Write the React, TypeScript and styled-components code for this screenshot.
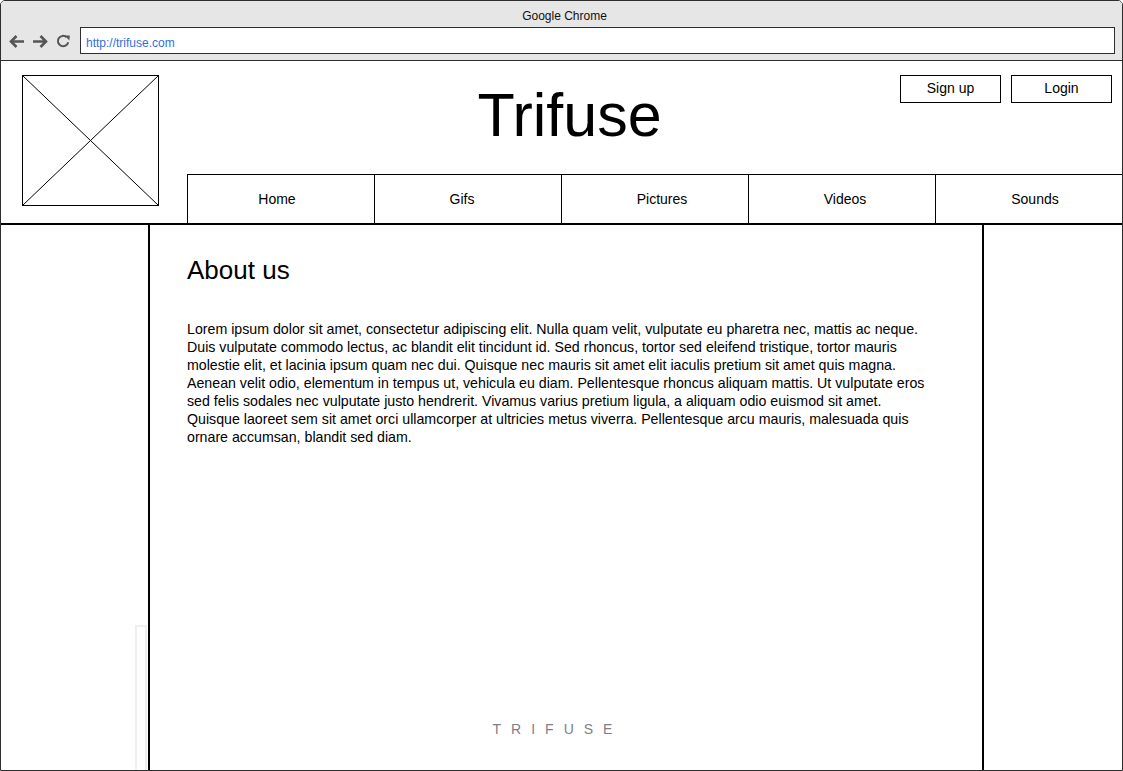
import React from "react";
import styled, { createGlobalStyle } from "styled-components";

const Global = createGlobalStyle`
  html, body { margin: 0; padding: 0; background: #fff; }
  body { font-family: "Liberation Sans", Arial, sans-serif; color: #000; }
  * { box-sizing: border-box; }
`;

const Frame = styled.div`
  width: 1123px;
  height: 771px;
  border: 1px solid #2e2e2e;
  border-radius: 5px 5px 0 0;
  display: flex;
  flex-direction: column;
  overflow: hidden;
  background: #fff;
`;

const TitleBar = styled.div`
  height: 60px;
  flex: none;
  background: #e6e6e6;
  border-bottom: 1px solid #2e2e2e;
  padding: 8px 7px 0 7px;
  display: flex;
  flex-direction: column;
  gap: 4px;
`;

const WindowTitle = styled.div`
  font-size: 12px;
  line-height: 14px;
  text-align: center;
  padding-left: 6px;
  color: #111;
`;

const AddressRow = styled.div`
  display: flex;
  align-items: center;
  height: 27px;
`;

const NavIcons = styled.div`
  display: flex;
  align-items: center;
  gap: 7px;
  width: 72px;
  padding-top: 1px;
  color: #555;
`;

const AddressBar = styled.div`
  flex: 1;
  height: 27px;
  background: #fff;
  border: 1px solid #2e2e2e;
  display: flex;
  align-items: center;
  padding: 4px 0 0 5px;
  font-size: 12px;
  color: #2f6fe0;
`;

const Header = styled.header`
  flex: none;
  height: 164px;
  border-bottom: 2px solid #000;
  display: grid;
  grid-template-columns: 186px 935px;
  grid-template-rows: 113px 49px;
`;

const LogoCell = styled.div`
  grid-column: 1;
  grid-row: 1 / 3;
  padding: 14px 0 0 21px;
`;

const Placeholder = styled.svg`
  display: block;
  width: 137px;
  height: 131px;
`;

const TopCell = styled.div`
  grid-column: 2;
  grid-row: 1;
  display: grid;
  grid-template-areas: "stack";
`;

const SiteTitle = styled.h1`
  grid-area: stack;
  margin: 0;
  padding: 24px 170px 0 0;
  font-size: 61px;
  line-height: 60px;
  font-weight: normal;
  text-align: center;
  align-self: start;
`;

const Actions = styled.div`
  grid-area: stack;
  justify-self: end;
  align-self: start;
  display: flex;
  gap: 10px;
  padding: 14px 10px 0 0;
`;

const ActionButton = styled.button`
  width: 101px;
  height: 28px;
  border: 1px solid #000;
  background: #fff;
  font-family: "Liberation Sans", Arial, sans-serif;
  font-size: 14px;
  color: #000;
  padding: 0 0 2px 0;
`;

const Nav = styled.nav`
  grid-column: 2;
  grid-row: 2;
  display: grid;
  grid-template-columns: repeat(5, 187px);
  border-top: 1px solid #000;
`;

const NavItem = styled.div<{ $shift: number }>`
  border-left: 1px solid #000;
  display: flex;
  align-items: center;
  justify-content: center;
  font-size: 14px;
  padding-bottom: 1px;
  padding-left: ${(p) => (p.$shift > 0 ? p.$shift * 2 : 0)}px;
  padding-right: ${(p) => (p.$shift < 0 ? -p.$shift * 2 : 0)}px;
`;

const Main = styled.main`
  flex: 1;
  display: grid;
  grid-template-columns: 147px 836px 138px;
  min-height: 0;
`;

const SideColumn = styled.div`
  display: flex;
  flex-direction: column;
  justify-content: flex-end;
  align-items: flex-end;
`;

const ScrollStub = styled.div`
  width: 12px;
  height: 145px;
  margin-right: 1px;
  border: 2px solid #efefef;
  border-bottom: none;
`;

const Content = styled.section`
  border-left: 2px solid #000;
  border-right: 2px solid #000;
  padding: 30px 47px 32px 37px;
  display: flex;
  flex-direction: column;
`;

const Heading = styled.h2`
  margin: 0;
  font-size: 26px;
  line-height: 30px;
  font-weight: normal;
`;

const Paragraph = styled.p`
  margin: 35px 0 0 0;
  font-size: 14.2px;
  line-height: 18px;
`;

const Footer = styled.div`
  margin-top: auto;
  text-align: center;
  font-size: 14px;
  line-height: 18px;
  letter-spacing: 10px;
  color: #7e8088;
  padding-right: 7px;
`;

const navItems: { label: string; shift: number }[] = [
  { label: "Home", shift: -4 },
  { label: "Gifs", shift: -6 },
  { label: "Pictures", shift: 7 },
  { label: "Videos", shift: 3 },
  { label: "Sounds", shift: 6 },
];

const text =
  "Lorem ipsum dolor sit amet, consectetur adipiscing elit. Nulla quam velit, vulputate eu pharetra nec, mattis ac neque. Duis vulputate commodo lectus, ac blandit elit tincidunt id. Sed rhoncus, tortor sed eleifend tristique, tortor mauris molestie elit, et lacinia ipsum quam nec dui. Quisque nec mauris sit amet elit iaculis pretium sit amet quis magna. Aenean velit odio, elementum in tempus ut, vehicula eu diam. Pellentesque rhoncus aliquam mattis. Ut vulputate eros sed felis sodales nec vulputate justo hendrerit. Vivamus varius pretium ligula, a aliquam odio euismod sit amet. Quisque laoreet sem sit amet orci ullamcorper at ultricies metus viverra. Pellentesque arcu mauris, malesuada quis ornare accumsan, blandit sed diam.";

const BackIcon = () => (
  <svg width="17" height="15" viewBox="0 0 17 15" fill="none" stroke="#555" strokeWidth="2.6">
    <path d="M16 7.5H3" />
    <path d="M8.5 2L3 7.5L8.5 13" />
  </svg>
);

const ForwardIcon = () => (
  <svg width="17" height="15" viewBox="0 0 17 15" fill="none" stroke="#555" strokeWidth="2.6">
    <path d="M1 7.5H14" />
    <path d="M8.5 2L14 7.5L8.5 13" />
  </svg>
);

const ReloadIcon = () => (
  <svg width="15" height="14" viewBox="0 0 15 14" fill="none">
    <path d="M12.2 8.2A5.2 5.2 0 1 1 10.6 3.2" stroke="#555" strokeWidth="2" />
    <path d="M8.6 1.6L13.8 1.4L13.4 6.6Z" fill="#555" />
  </svg>
);

export default function App() {
  return (
    <>
      <Global />
      <Frame>
        <TitleBar>
          <WindowTitle>Google Chrome</WindowTitle>
          <AddressRow>
            <NavIcons>
              <BackIcon />
              <ForwardIcon />
              <ReloadIcon />
            </NavIcons>
            <AddressBar>http://trifuse.com</AddressBar>
          </AddressRow>
        </TitleBar>
        <Header>
          <LogoCell>
            <Placeholder viewBox="0 0 137 131">
              <rect x="0.5" y="0.5" width="136" height="130" fill="#fff" stroke="#000" />
              <path d="M0.5 0.5L136.5 130.5M136.5 0.5L0.5 130.5" stroke="#000" strokeWidth="1" />
            </Placeholder>
          </LogoCell>
          <TopCell>
            <SiteTitle>Trifuse</SiteTitle>
            <Actions>
              <ActionButton>Sign up</ActionButton>
              <ActionButton>Login</ActionButton>
            </Actions>
          </TopCell>
          <Nav>
            {navItems.map((n) => (
              <NavItem key={n.label} $shift={n.shift}>
                {n.label}
              </NavItem>
            ))}
          </Nav>
        </Header>
        <Main>
          <SideColumn>
            <ScrollStub />
          </SideColumn>
          <Content>
            <Heading>About us</Heading>
            <Paragraph>{text}</Paragraph>
            <Footer>TRIFUSE</Footer>
          </Content>
          <SideColumn />
        </Main>
      </Frame>
    </>
  );
}
